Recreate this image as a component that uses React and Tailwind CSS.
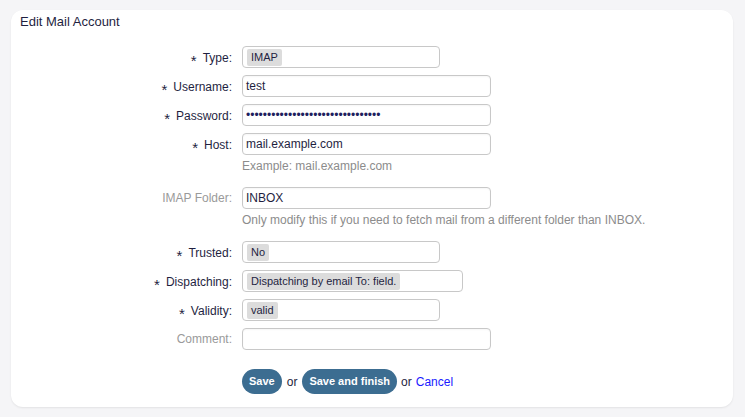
import React from "react";

const Req = () => (
  <span className="inline-block relative top-[4px] mr-[6px] text-[15px] leading-none">*</span>
);

function Row({ label, required, optional, children, hint }) {
  return (
    <div className="flex flex-col">
      <div className="flex items-center h-[22px]">
        <div
          className={
            "w-[221px] shrink-0 text-right text-[12px] leading-[14px] " +
            (optional ? "text-[#9a9a9a]" : "text-[#1f1f3f]")
          }
        >
          {required && <Req />}
          {label}
        </div>
        <div className="ml-[10px]">{children}</div>
      </div>
      {hint && (
        <div className="ml-[231px] mt-[4px] mb-[7px] h-[14px] text-[12px] leading-[14px] text-[#8c8c8c]">
          {hint}
        </div>
      )}
    </div>
  );
}

function TextBox({ w, value }) {
  return (
    <div
      className="h-[22px] border border-[#c8c8c8] rounded-[4px] bg-white flex items-center pl-[3px] text-[12px] text-[#1f1f3f] shadow-[inset_0_1px_2px_rgba(0,0,0,0.04)]"
      style={{ width: w }}
    >
      {value}
    </div>
  );
}

function SelectBox({ w, value }) {
  return (
    <div
      className="h-[22px] border border-[#c8c8c8] rounded-[4px] bg-white flex items-center pl-[4px]"
      style={{ width: w }}
    >
      <span className="bg-[#dcdcdc] rounded-[2px] px-[4px] h-[17px] leading-[17px] text-[11px] text-[#1f1f3f]">
        {value}
      </span>
    </div>
  );
}

export default function App() {
  return (
    <div
      className="w-[745px] h-[417px] bg-[#f5f5f7] pt-[10px] pl-[11px]"
      style={{ fontFamily: '"Liberation Sans", Arial, sans-serif' }}
    >
      <div className="w-[722px] h-[397px] bg-white rounded-[12px] shadow-[0_1px_2px_rgba(0,0,0,0.08)] pt-[4px]">
        <div className="pl-[9px] h-[16px] leading-[16px] text-[13px] text-[#1f1f3f]">
          Edit Mail Account
        </div>
        <div className="mt-[16px] flex flex-col gap-[7px]">
          <Row label="Type:" required>
            <SelectBox w={198} value="IMAP" />
          </Row>
          <Row label="Username:" required>
            <TextBox w={249} value="test" />
          </Row>
          <Row label="Password:" required>
            <TextBox
              w={249}
              value={
                <span className="text-[12px] text-[#1f1f5f]">
                  {"•".repeat(32)}
                </span>
              }
            />
          </Row>
          <Row label="Host:" required hint="Example: mail.example.com">
            <TextBox w={249} value="mail.example.com" />
          </Row>
          <Row
            label="IMAP Folder:"
            optional
            hint="Only modify this if you need to fetch mail from a different folder than INBOX."
          >
            <TextBox w={249} value="INBOX" />
          </Row>
          <Row label="Trusted:" required>
            <SelectBox w={198} value="No" />
          </Row>
          <Row label="Dispatching:" required>
            <SelectBox w={221} value="Dispatching by email To: field." />
          </Row>
          <Row label="Validity:" required>
            <SelectBox w={198} value="valid" />
          </Row>
          <Row label="Comment:" optional>
            <TextBox w={249} value="" />
          </Row>
        </div>
        <div className="mt-[19px] ml-[231px] flex items-center text-[12px] text-[#1f1f3f]">
          <button className="h-[25px] px-[7px] rounded-full bg-[#3c6d91] text-white font-bold text-[11px]">
            Save
          </button>
          <span className="mx-[5px]">or</span>
          <button className="h-[25px] px-[7px] rounded-full bg-[#3c6d91] text-white font-bold text-[11px]">
            Save and finish
          </button>
          <span className="ml-[4px] mr-[4px]">or</span>
          <a className="text-[#1a1aff] cursor-pointer">Cancel</a>
        </div>
      </div>
    </div>
  );
}
